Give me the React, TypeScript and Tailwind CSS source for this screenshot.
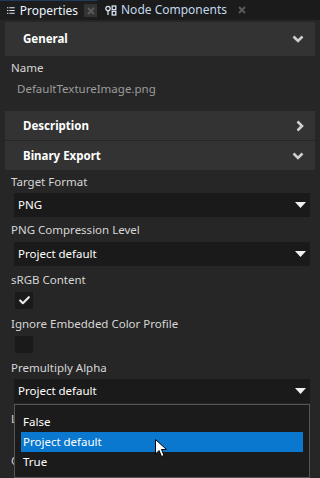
import { Check } from "lucide-react";

function ChevronDown() {
  return (
    <svg width="12" height="8" viewBox="0 0 12 8" className="text-[#cfcfcf]">
      <path d="M1.5 1.5 L6 6 L10.5 1.5" fill="none" stroke="currentColor" strokeWidth="2.6" />
    </svg>
  );
}

function ChevronRight() {
  return (
    <svg width="8" height="12" viewBox="0 0 8 12" className="text-[#cfcfcf]">
      <path d="M1.5 1.5 L6 6 L1.5 10.5" fill="none" stroke="currentColor" strokeWidth="2.6" />
    </svg>
  );
}

function Caret() {
  return (
    <svg width="11" height="6" viewBox="0 0 11 6">
      <path d="M0 0 H11 L5.5 6 Z" fill="#f0f0f0" />
    </svg>
  );
}

function CloseX({ boxed }: { boxed?: boolean }) {
  return (
    <span className={`flex h-[13px] w-[13px] items-center justify-center ${boxed ? "bg-[#333333]" : ""}`}>
      <svg width="8" height="8" viewBox="0 0 8 8">
        <path d="M1 1 L7 7 M7 1 L1 7" stroke="#5a5a5a" strokeWidth="2" />
      </svg>
    </span>
  );
}

function SectionHeader({ title, open, tall }: { title: string; open: boolean; tall?: boolean }) {
  return (
    <div className={`flex items-center justify-between bg-[#333333] pl-[18px] pr-[11px] ${tall ? "h-[34px]" : "h-[29px]"}`}>
      <span className="text-[11.5px] font-bold text-white">{title}</span>
      {open ? <ChevronDown /> : <ChevronRight />}
    </div>
  );
}

function Dropdown({ value }: { value: string }) {
  return (
    <div className="ml-[14px] mr-[10px] flex h-[24px] items-center justify-between bg-[#1a1a1a] pl-[4px] pr-[4px] text-[11.5px] text-white">
      <span>{value}</span>
      <Caret />
    </div>
  );
}

function Label({ text, className = "" }: { text: string; className?: string }) {
  return <div className={`h-[16px] pl-[11px] text-[11.5px] leading-[16px] text-[#d6d6d6] ${className}`}>{text}</div>;
}

function Checkbox({ checked }: { checked?: boolean }) {
  return (
    <div className="ml-[15px] flex h-[17px] w-[18px] items-center justify-center bg-[#1a1a1a]">
      {checked && <Check size={13} strokeWidth={4} className="text-[#e8e8e8]" />}
    </div>
  );
}

export default function App() {
  const options = ["False", "Project default", "True"];

  return (
    <div
      className="relative h-[478px] w-[320px] overflow-hidden bg-[#262626]"
      style={{ fontFamily: '"Noto Sans", "Open Sans", sans-serif' }}
    >
      {/* Tab bar */}
      <div className="flex h-[20px] items-center bg-[#1b1b1b] text-[12px]">
        <div className="flex h-full w-[98px] items-center border-r border-t border-[#1b1b1b] border-t-[#1f3a5a] bg-[#1d1d1d] pl-[7px]">
          <svg width="11" height="9" viewBox="0 0 11 9" className="mr-[5px]">
            <path d="M0 0.5 H2 M0 4.5 H2 M0 8.5 H2 M3.5 0.5 H11 M3.5 4.5 H11 M3.5 8.5 H11" stroke="#dfe9f5" strokeWidth="1.6" />
          </svg>
          <span className="text-[#eaf4ff]">Properties</span>
          <span className="ml-[6px]">
            <CloseX boxed />
          </span>
        </div>
        <div className="flex h-full items-center pl-[7px]">
          <svg width="12" height="11" viewBox="0 0 12 11" className="mr-[4px]">
            <circle cx="3" cy="3.5" r="2.2" fill="none" stroke="#d6e4f2" strokeWidth="1.3" />
            <path d="M3 5.7 V10" stroke="#d6e4f2" strokeWidth="1.3" />
            <rect x="7.2" y="1" width="3.6" height="3.6" fill="none" stroke="#d6e4f2" strokeWidth="1.3" />
            <rect x="7.2" y="6.4" width="3.6" height="3.6" fill="none" stroke="#d6e4f2" strokeWidth="1.3" />
          </svg>
          <span className="text-[#c2d8ee]">Node Components</span>
          <span className="ml-[8px]">
            <CloseX />
          </span>
        </div>
      </div>

      {/* Content */}
      <div className="pt-[2px]">
        <div className="px-[5px]">
          <SectionHeader title="General" open tall />
        </div>
        <div className="pt-[4px]">
          <Label text="Name" />
          <div className="mt-[5px] h-[16px] pl-[17px] text-[11.5px] leading-[16px] text-[#9c9c9c]">DefaultTextureImage.png</div>
        </div>
        <div className="mt-[14px] flex flex-col gap-[1px] px-[5px]">
          <SectionHeader title="Description" open={false} />
          <SectionHeader title="Binary Export" open />
        </div>

        <div className="pt-[4px]">
          <Label text="Target Format" />
          <div className="mt-[3px]">
            <Dropdown value="PNG" />
          </div>
          <Label text="PNG Compression Level" className="mt-[5px]" />
          <div className="mt-[4px]">
            <Dropdown value="Project default" />
          </div>
          <Label text="sRGB Content" className="mt-[6px]" />
          <div className="mt-[4px]">
            <Checkbox checked />
          </div>
          <Label text="Ignore Embedded Color Profile" className="mt-[7px]" />
          <div className="mt-[4px]">
            <Checkbox />
          </div>
          <Label text="Premultiply Alpha" className="mt-[7px]" />
          <div className="mt-[3px]">
            <Dropdown value="Project default" />
          </div>
          {/* only the first letters of the next labels peek out from under the list */}
          <Label text="L" className="mt-[8px]" />
          <Label text="C" className="mt-[26px]" />
        </div>
      </div>

      {/* Open dropdown list */}
      <div className="absolute left-[14px] top-[404px] w-[296px] border border-[#555555] bg-[#1b1b1b] px-[6px] pb-[5px] pt-[7px] text-[11.5px] text-white">
        {options.map((opt) => (
          <div
            key={opt}
            className={`h-[20px] pl-[2px] leading-[20px] ${opt === "Project default" ? "bg-[#0a78cf]" : ""}`}
          >
            {opt}
          </div>
        ))}
      </div>

      {/* Mouse pointer */}
      <svg width="13" height="19" viewBox="0 0 13 19" className="absolute left-[155px] top-[439px]">
        <path d="M0.5 0.5 V15 L4 11.5 L6.5 17.5 L9 16.5 L6.5 10.5 H11.5 Z" fill="#ffffff" stroke="#000000" strokeWidth="1" />
      </svg>
    </div>
  );
}
